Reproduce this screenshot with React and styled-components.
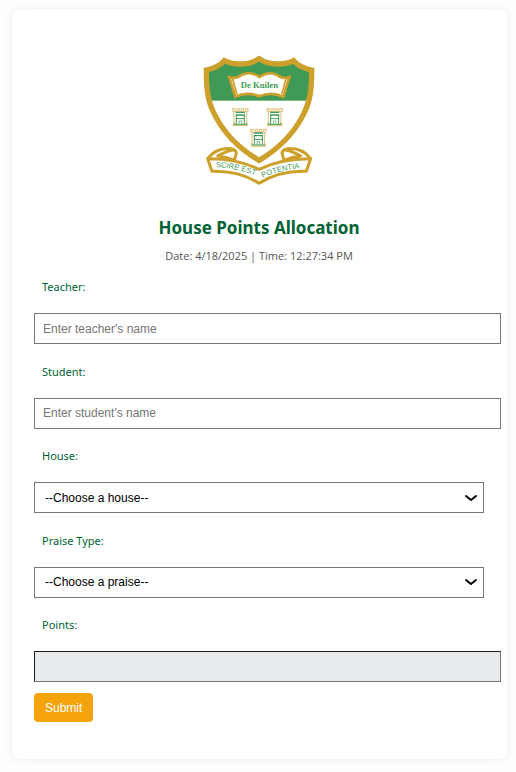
import React, { useState } from "react";
import styled, { createGlobalStyle, css } from "styled-components";

const GlobalStyle = createGlobalStyle`
  *, *::before, *::after { box-sizing: border-box; }
  body {
    margin: 0;
    background: #fefefe;
    font-family: "Open Sans", "Noto Sans", sans-serif;
  }
`;

const Page = styled.main`
  padding: 10px 9px 13px 12px;
`;

const Card = styled.section`
  display: flex;
  flex-direction: column;
  padding: 35px 23px 37px 22px;
  border-radius: 8px;
  background: #fff;
  box-shadow: 0 0 12px rgba(0, 0, 0, 0.08);
`;

const Crest = styled.svg`
  display: block;
  align-self: center;
  width: 130px;
  height: 150px;
`;

const Title = styled.h1`
  margin: 19px 0 0;
  color: #006233;
  font-family: "Noto Sans", "Open Sans", sans-serif;
  font-size: 17px;
  font-weight: 700;
  line-height: 28px;
  text-align: center;
`;

const Stamp = styled.p`
  margin: 5px 0 0;
  color: #555;
  font-size: 11px;
  line-height: 18px;
  text-align: center;
`;

const Form = styled.form`
  display: flex;
  flex-direction: column;
  align-items: flex-start;
  gap: 11px;
  margin-top: 13px;
`;

const Fields = styled.div`
  display: flex;
  flex-direction: column;
  justify-content: space-between;
  width: 100%;
  min-height: 404px;
`;

const Field = styled.div`
  display: flex;
  flex-direction: column;
  gap: 17px;
`;

const Label = styled.label`
  padding-left: 8px;
  color: #006233;
  font-family: "Noto Sans", "Open Sans", sans-serif;
  font-size: 11px;
  line-height: 18px;
`;

const controlText = css`
  height: 31px;
  border: 1px solid #767676;
  border-radius: 0;
  background: #fff;
  color: #000;
  font-family: "Liberation Sans", Arial, sans-serif;
  font-size: 12px;
`;

const TextInput = styled.input`
  ${controlText}
  box-sizing: content-box;
  width: 100%;
  height: 29px;
  padding: 0 7px 0 8px;

  &::placeholder { color: #757575; opacity: 1; }

  &:read-only {
    border-color: #1c1c1c #767676 #767676 #1c1c1c;
    background: #e7ebee;
  }
`;

const SelectWrap = styled.div`
  display: grid;
  align-items: center;

  & > * { grid-area: 1 / 1; }
`;

const Select = styled.select`
  ${controlText}
  appearance: none;
  width: 100%;
  padding: 0 28px 0 10px;
`;

const Chevron = styled.svg`
  justify-self: end;
  width: 14px;
  height: 10px;
  margin-right: 6px;
  pointer-events: none;
`;

const Submit = styled.button`
  height: 29px;
  padding: 0 11px;
  border: 0;
  border-radius: 4px;
  background: #f5a30d;
  color: #fff;
  font-family: "Liberation Sans", Arial, sans-serif;
  font-size: 12px;
  cursor: pointer;
`;

const GOLD = "#cda02c";
const GREEN = "#3f9a56";

function Tower({ x, y }) {
  return (
    <g transform={`translate(${x} ${y})`} fill="none">
      <path d="M1 0v9h46V0M1 1h8v6M15 7V1h7v6M27 7V1h7v6M39 7V1h8" stroke={GOLD} strokeWidth="2" />
      <path d="M5 10v38M43 10v38M1 45h7M40 45h7" stroke={GOLD} strokeWidth="2" />
      <path d="M10 12h28M10 20h28" stroke={GREEN} strokeWidth="4" />
      <path d="M11 31h26M12 20v28M36 20v28" stroke={GREEN} strokeWidth="3" />
      <path d="M20 48V38h8v10" stroke={GREEN} strokeWidth="2" />
      <path d="M3 48h42" stroke={GREEN} strokeWidth="3" />
      <path d="M0 52h48" stroke={GOLD} strokeWidth="2" />
    </g>
  );
}

function SchoolCrest() {
  const shield =
    "M192 41C174 54 155 57 135 57Q106 57 88 47Q72 67 34 75C34 130 38 169 57 205C87 266 134 312 192 346C250 312 297 266 327 205C346 169 350 130 350 75Q312 67 296 47Q278 57 249 57C229 57 210 54 192 41Z";
  return (
    <Crest viewBox="-3 0 390 450" role="img" aria-label="De Kuilen school crest">
      <defs>
        <clipPath id="shield-field">
          <path d={shield} />
        </clipPath>
        <path id="motto-left" d="M62 366Q130 370 200 398" />
        <path id="motto-right" d="M203 398Q255 374 340 368" />
      </defs>
      <path d={shield} fill="#fff" />
      <rect width="390" height="167" fill={GREEN} clipPath="url(#shield-field)" />
      <path d={shield} fill="none" stroke={GOLD} strokeWidth="16" />

      <path
        d="M103 97Q124 103 139 90Q166 77 193 96Q220 77 247 90Q262 103 283 97L265 155Q229 139 193 154Q157 139 121 155Z"
        fill="#fff"
        stroke={GOLD}
        strokeWidth="8"
      />
      <path d="M113 102L126 148M273 102L260 148" stroke={GOLD} strokeWidth="5" />
      <text
        x="193"
        y="129"
        textAnchor="middle"
        fill={GREEN}
        fontFamily="Liberation Serif, serif"
        fontWeight="700"
        fontSize="26"
      >
        De Kuilen
      </text>

      <Tower x={112} y={190} />
      <Tower x={215} y={190} />
      <Tower x={166} y={252} />

      <g fill="#fff" stroke={GOLD} strokeWidth="9" strokeLinejoin="round">
        <path d="M38 341Q64 307 108 311Q122 313 124 324L118 346Q94 336 68 333Q88 320 116 314" />
        <path d="M347 341Q321 307 277 311Q263 313 261 324L267 346Q291 336 317 333Q297 320 269 314" />
        <path d="M38 341Q126 340 192 373Q259 340 347 341L334 379Q254 376 192 415Q131 376 51 379Z" />
      </g>
      <g fill={GREEN} fontFamily="Liberation Sans, sans-serif" fontSize="23">
        <text>
          <textPath href="#motto-left">SCIRE EST</textPath>
        </text>
        <text>
          <textPath href="#motto-right">POTENTIA</textPath>
        </text>
      </g>
    </Crest>
  );
}

function SelectField({ id, label, placeholder, options, value, onChange }) {
  return (
    <Field>
      <Label htmlFor={id}>{label}</Label>
      <SelectWrap>
        <Select id={id} value={value} onChange={(e) => onChange(e.target.value)}>
          <option value="">{placeholder}</option>
          {options.map((option) => (
            <option key={option}>{option}</option>
          ))}
        </Select>
        <Chevron viewBox="0 0 14 10" aria-hidden="true">
          <path d="M2 3l5 4 5-4" fill="none" stroke="#000" strokeWidth="2" strokeLinecap="round" />
        </Chevron>
      </SelectWrap>
    </Field>
  );
}

export default function App() {
  const [house, setHouse] = useState("");
  const [praise, setPraise] = useState("");

  return (
    <>
      <GlobalStyle />
      <Page>
        <Card>
          <SchoolCrest />
          <Title>House Points Allocation</Title>
          <Stamp>Date: 4/18/2025 | Time: 12:27:34 PM</Stamp>
          <Form onSubmit={(e) => e.preventDefault()}>
            <Fields>
              <Field>
                <Label htmlFor="teacher">Teacher:</Label>
                <TextInput id="teacher" placeholder="Enter teacher's name" />
              </Field>
              <Field>
                <Label htmlFor="student">Student:</Label>
                <TextInput id="student" placeholder="Enter student's name" />
              </Field>
              <SelectField
                id="house"
                label="House:"
                placeholder="--Choose a house--"
                options={[]}
                value={house}
                onChange={setHouse}
              />
              <SelectField
                id="praise"
                label="Praise Type:"
                placeholder="--Choose a praise--"
                options={[]}
                value={praise}
                onChange={setPraise}
              />
              <Field>
                <Label htmlFor="points">Points:</Label>
                <TextInput id="points" readOnly />
              </Field>
            </Fields>
            <Submit type="submit">Submit</Submit>
          </Form>
        </Card>
      </Page>
    </>
  );
}
